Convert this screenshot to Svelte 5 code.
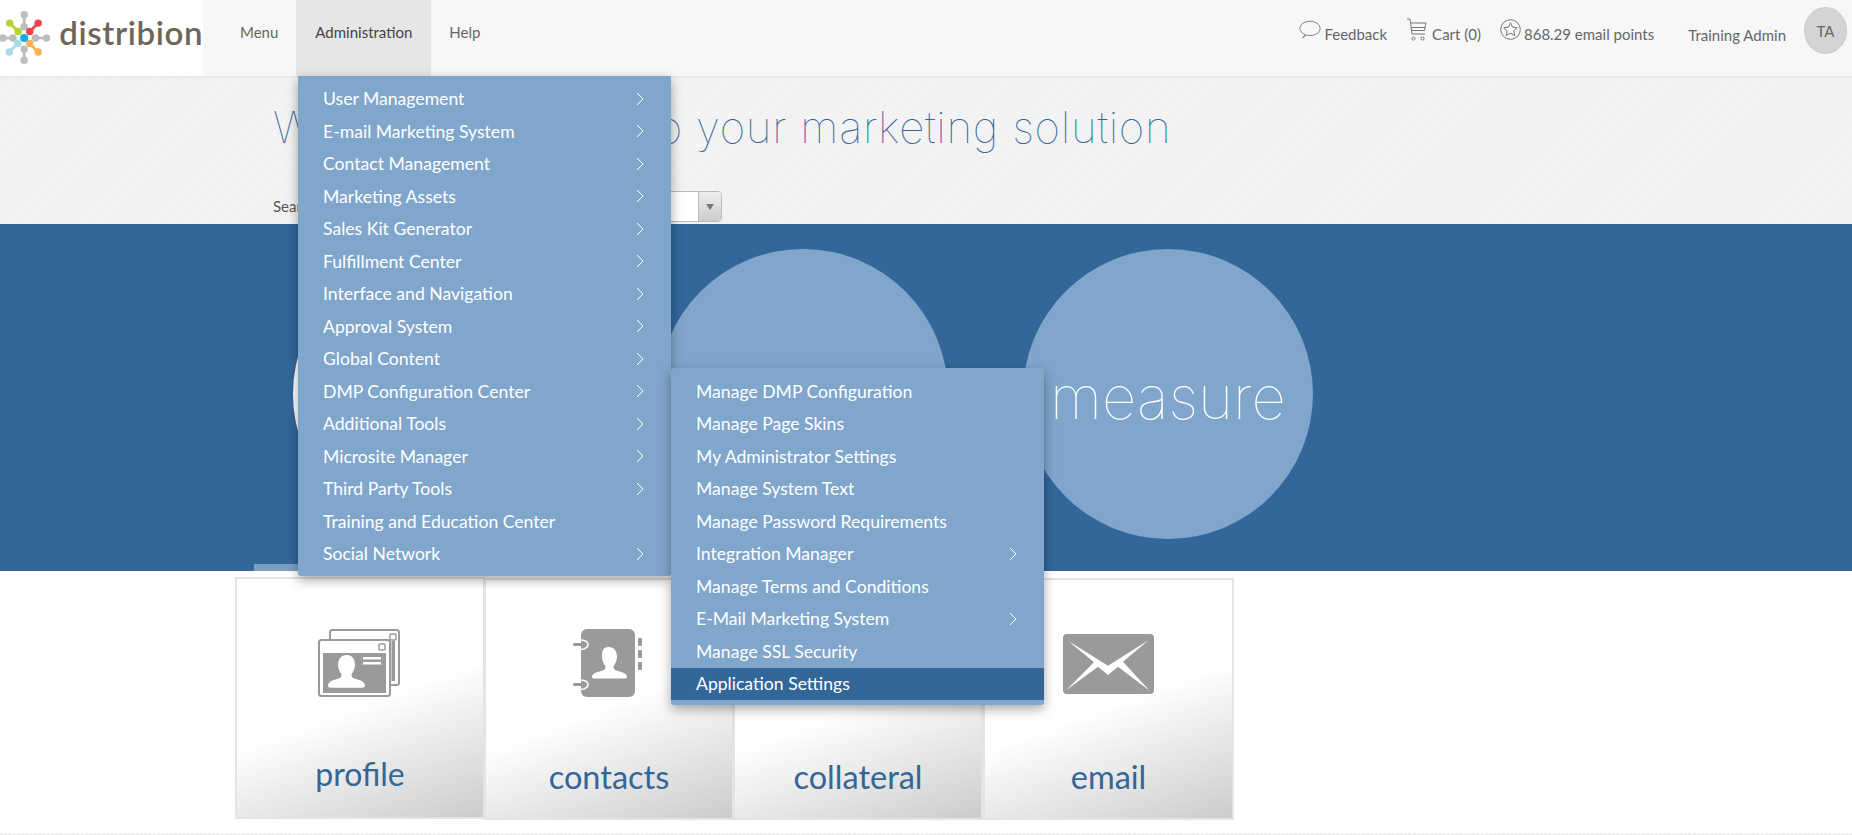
<script lang="ts">
  const navItems = ['Menu', 'Administration', 'Help'];

  const adminItems = [
    { label: 'User Management', sub: true },
    { label: 'E-mail Marketing System', sub: true },
    { label: 'Contact Management', sub: true },
    { label: 'Marketing Assets', sub: true },
    { label: 'Sales Kit Generator', sub: true },
    { label: 'Fulfillment Center', sub: true },
    { label: 'Interface and Navigation', sub: true },
    { label: 'Approval System', sub: true },
    { label: 'Global Content', sub: true },
    { label: 'DMP Configuration Center', sub: true },
    { label: 'Additional Tools', sub: true },
    { label: 'Microsite Manager', sub: true },
    { label: 'Third Party Tools', sub: true },
    { label: 'Training and Education Center', sub: false },
    { label: 'Social Network', sub: true }
  ];

  const dmpItems = [
    { label: 'Manage DMP Configuration', sub: false },
    { label: 'Manage Page Skins', sub: false },
    { label: 'My Administrator Settings', sub: false },
    { label: 'Manage System Text', sub: false },
    { label: 'Manage Password Requirements', sub: false },
    { label: 'Integration Manager', sub: true },
    { label: 'Manage Terms and Conditions', sub: false },
    { label: 'E-Mail Marketing System', sub: true },
    { label: 'Manage SSL Security', sub: false },
    { label: 'Application Settings', sub: false, active: true }
  ];

  const spokes = [
    { x1: 26, y1: 12, x2: 26, y2: 25, c: '#bdbdbd' },
    { x1: 3, y1: 37, x2: 14, y2: 37, c: '#bdbdbd' },
    { x1: 50, y1: 37, x2: 38, y2: 37, c: '#bdbdbd' },
    { x1: 26, y1: 61, x2: 26, y2: 49, c: '#bdbdbd' },
    { x1: 10.5, y1: 21, x2: 19.5, y2: 30, c: '#b5d334' },
    { x1: 41, y1: 21, x2: 32, y2: 30, c: '#e8434b' },
    { x1: 10, y1: 52, x2: 19, y2: 43, c: '#a8dde8' },
    { x1: 41, y1: 52, x2: 32, y2: 43, c: '#fbb254' }
  ];
</script>

<div class="page">
  <header class="topbar">
    <div class="logo">
      <svg width="54" height="74" viewBox="0 0 54 74">
        {#each spokes as s}
          <line x1={s.x1} y1={s.y1} x2={s.x2} y2={s.y2} stroke={s.c} stroke-width="3" />
          <circle cx={s.x1} cy={s.y1} r="4" fill={s.c} />
          <circle cx={s.x2} cy={s.y2} r="4" fill={s.c} />
        {/each}
        <circle cx="26" cy="37" r="4.4" fill="#0fb0e0" />
      </svg>
      <span class="logo-text">distribion</span>
    </div>

    <nav class="nav">
      {#each navItems as item}
        <span class="nav-item" class:open={item === 'Administration'}>{item}</span>
      {/each}
    </nav>

    <div class="tools">
      <span class="tool feedback">
        <svg width="22" height="21" viewBox="0 0 24 22" fill="none" stroke="#777" stroke-width="1">
          <path d="M4 19.5c1.500-.5 2.500-1.500 3-3 C3.500 15.500 1 13 1 10 C1 5.500 6 2 12 2 s11 3.500 11 8 -5 7.500 -11 7.500 c-1.500 0 -3 -.2 -4 -.5 -1 1.300 -2.500 2.300 -4 2.500z" />
        </svg>
        Feedback
      </span>
      <span class="tool">
        <svg width="21" height="24" viewBox="0 0 21 24" fill="none" stroke="#777" stroke-width="1">
          <path d="M1 1h3l2 15h13" />
          <path d="M4.500 5H20l-1.500 7.500H5.500" />
          <path d="M5.500 9.500h13.500" />
          <circle cx="7.500" cy="20.500" r="1.600" />
          <circle cx="16.500" cy="20.500" r="1.600" />
        </svg>
        Cart (0)
      </span>
      <span class="tool points">
        <svg width="21" height="21" viewBox="0 0 21 21" fill="none" stroke="#777" stroke-width="1">
          <circle cx="10.500" cy="10.500" r="9.800" />
          <path d="M10.500 3.800l2 4.300 4.700.6-3.400 3.200.9 4.600-4.200-2.300-4.200 2.300.9-4.600-3.400-3.200 4.700-.6z" />
        </svg>
        868.29 email points
      </span>
      <span class="user">Training Admin</span>
      <span class="avatar">TA</span>
    </div>
  </header>

  <section class="welcome">
    <h1><span class="greeting">Welcome</span> to your marketing solution</h1>
    <div class="search">
      <span class="search-label">Search</span>
      <div class="select">
        <span class="select-field"></span>
        <span class="select-btn"><span class="caret"></span></span>
      </div>
    </div>
  </section>

  <section class="hero">
    <div class="circle white"></div>
    <div class="circle"></div>
    <div class="circle"><span class="circle-text">measure</span></div>
    <span class="hero-tab"></span>
  </section>

  <section class="tiles">
    <div class="tile">
      <svg class="icon-profile" width="82" height="68" viewBox="0 0 82 68" fill="none">
        <rect x="12" y="1" width="69" height="55" rx="2.500" stroke="#9a9a9a" stroke-width="2" />
        <rect x="73.500" y="12" width="3.500" height="40" fill="#9a9a9a" />
        <rect x="72" y="5" width="6" height="6" rx="1" stroke="#9a9a9a" stroke-width="1.500" />
        <rect x="1" y="11" width="71" height="56" rx="2.500" stroke="#9a9a9a" stroke-width="2" fill="#fff" />
        <rect x="61" y="15" width="6" height="6" rx="1" stroke="#9a9a9a" stroke-width="1.500" />
        <rect x="5" y="24" width="63" height="40" fill="#9a9a9a" />
        <path d="M29 26c5 0 8 4 8 10 0 4-2 7-3.500 9.500 0 3 2 4 6 5 5 1 7.500 3.500 7.500 6.500 0 1-1 1.700-3 1.700H13c-2 0-3-.7-3-1.700 0-3 2.500-5.500 7.500-6.500 4-1 6-2 6-5-1.500-2.500-3.500-5.500-3.500-9.500 0-6 3-10 9-10z" fill="#fff" />
        <rect x="45" y="28" width="18" height="2.500" fill="#fff" />
        <rect x="45" y="33" width="18" height="2.500" fill="#fff" />
      </svg>
      <span class="tile-label">profile</span>
    </div>
    <div class="tile">
      <svg class="icon-contacts" width="70" height="68" viewBox="0 0 70 68">
        <rect x="8" y="0" width="54" height="68" rx="6" fill="#9a9a9a" />
        <rect x="65" y="9" width="4" height="8" rx="1" fill="#9a9a9a" />
        <rect x="65" y="21" width="4" height="8" rx="1" fill="#9a9a9a" />
        <rect x="65" y="33" width="4" height="8" rx="1" fill="#9a9a9a" />
        <path d="M8 11q7 .5 7 4.500t-7 5" fill="#9a9a9a" stroke="#fff" stroke-width="1.500" />
        <rect x="0" y="14" width="13" height="3" rx="1.500" fill="#9a9a9a" />
        <path d="M8 51q7 .5 7 4.500t-7 5" fill="#9a9a9a" stroke="#fff" stroke-width="1.500" />
        <rect x="0" y="54" width="13" height="3" rx="1.500" fill="#9a9a9a" />
        <path d="M35.500 18c5.500 0 8.500 4 8.500 10 0 4-2 7-3.500 9.500 0 3 2 4 6 5 5 1 7.500 3 7.500 5.500 0 1-1 1.500-3 1.500H22c-2 0-3-.5-3-1.500 0-2.500 2.500-4.500 7.500-5.500 4-1 6-2 6-5-1.500-2.500-3.500-5.500-3.500-9.500 0-6 1-10 6.500-10z" fill="#fff" />
      </svg>
      <span class="tile-label">contacts</span>
    </div>
    <div class="tile">
      <span class="tile-label">collateral</span>
    </div>
    <div class="tile">
      <svg class="envelope" width="91" height="60" viewBox="0 0 91 60">
        <rect x="0" y="0" width="91" height="60" rx="4" fill="#9a9a9a" />
        <path d="M5 6.700L45 31.700 85.700 6 60 27.700 86.700 56.700 55 32.700 45 41 35 32.700 3.300 56 31 28.300z" fill="#fff" />
      </svg>
      <span class="tile-label">email</span>
    </div>
  </section>

  <div class="footer-strip"></div>

  <ul class="menu menu-admin">
    {#each adminItems as item}
      <li class="menu-row">
        <span>{item.label}</span>
        {#if item.sub}
          <svg class="chev" width="8" height="14" viewBox="0 0 8 14" fill="none" stroke="#fff" stroke-width="1">
            <path d="M1 1l6 6-6 6" />
          </svg>
        {/if}
      </li>
    {/each}
  </ul>

  <ul class="menu menu-dmp">
    {#each dmpItems as item}
      <li class="menu-row" class:active={item.active}>
        <span>{item.label}</span>
        {#if item.sub}
          <svg class="chev" width="8" height="14" viewBox="0 0 8 14" fill="none" stroke="#fff" stroke-width="1">
            <path d="M1 1l6 6-6 6" />
          </svg>
        {/if}
      </li>
    {/each}
  </ul>
</div>

<style>
  :global(body) {
    margin: 0;
    background: #fff;
    font-family: 'Lato', 'Liberation Sans', sans-serif;
  }

  .page {
    position: relative;
    height: 835px;
    overflow: hidden;
  }

  .topbar {
    display: flex;
    height: 76px;
    background: #f7f7f7;
    border-bottom: 2px solid #eaeaea;
  }

  .logo {
    width: 203px;
    background: #fff;
    display: flex;
    align-items: center;
    flex-shrink: 0;
  }

  .logo-text {
    font-size: 33px;
    font-weight: 600;
    color: #6f6558;
    letter-spacing: 0.6px;
    margin-left: 9px;
    margin-top: -13px;
  }

  .nav {
    display: flex;
    margin-left: 19px;
  }

  .nav-item {
    padding: 23px 18px 0;
    font-size: 15px;
    color: #666;
  }

  .nav-item.open {
    background: #e6e6e6;
    color: #444;
    padding: 23px 19px 0;
  }

  .tools {
    margin-left: auto;
    display: flex;
    align-items: flex-start;
    padding-right: 5px;
    font-size: 15px;
    color: #666;
  }

  .tool {
    display: flex;
    align-items: center;
    gap: 5px;
    margin-right: 19px;
    height: 60px;
    padding-top: 8px;
    box-sizing: border-box;
  }

  .tool svg {
    margin-top: -9px;
  }

  .tool.feedback {
    gap: 3px;
  }

  .tool.points {
    gap: 3px;
  }

  .user {
    margin: 0 18px 0 15px;
    line-height: 70px;
  }

  .avatar {
    width: 43px;
    height: 47px;
    margin-top: 7px;
    border-radius: 50%;
    background: #d4d4d4;
    border: 1px solid #ccc;
    box-sizing: border-box;
    display: flex;
    align-items: center;
    justify-content: center;
    font-size: 15px;
  }

  .welcome {
    height: 146px;
    box-sizing: border-box;
    padding: 21px 0 0 273px;
    background-color: #f3f3f3;
    background-image: repeating-linear-gradient(135deg, #f6f6f6 0 1px, #f1f1f1 1px 3px);
  }

  h1 {
    margin: 0;
    font-family: 'Inter', 'Lato', sans-serif;
    font-size: 44px;
    font-weight: 100;
    line-height: 56px;
    letter-spacing: 0.7px;
    color: #336699;
  }

  .greeting {
    margin-right: 169px;
  }

  .search {
    display: flex;
    align-items: center;
    margin-top: 35px;
    width: 449px;
    height: 32px;
  }

  .search-label {
    font-size: 15px;
    color: #555;
  }

  .select {
    margin-left: auto;
    display: flex;
    width: 320px;
    height: 31px;
    border: 1px solid #bbb;
    border-radius: 4px;
    box-sizing: border-box;
    overflow: hidden;
    background: #fff;
  }

  .select-field {
    flex: 1;
  }

  .select-btn {
    width: 22px;
    background: linear-gradient(#eee, #ccc);
    border-left: 1px solid #bbb;
    display: flex;
    align-items: center;
    justify-content: center;
  }

  .caret {
    width: 0;
    height: 0;
    border-left: 4px solid transparent;
    border-right: 4px solid transparent;
    border-top: 6px solid #777;
    margin-top: 2px;
  }

  .hero {
    position: relative;
    height: 347px;
    background: #336699;
    display: flex;
    align-items: center;
    gap: 75px;
    padding: 0 0 8px 293px;
    box-sizing: border-box;
  }

  .circle {
    width: 290px;
    height: 290px;
    border-radius: 50%;
    background: #80a6cc;
    display: flex;
    align-items: center;
    justify-content: center;
    flex-shrink: 0;
  }

  .circle.white {
    background: #fff;
  }

  .circle-text {
    font-family: 'Inter', 'Lato', sans-serif;
    font-size: 60px;
    font-weight: 100;
    color: #fff;
    margin-top: 7px;
  }

  .hero-tab {
    position: absolute;
    left: 254px;
    bottom: 0;
    width: 60px;
    height: 7px;
    background: #7f9fc0;
  }

  .tiles {
    display: flex;
    margin: 6px 0 0 235px;
  }

  .tile {
    width: 250px;
    height: 242px;
    box-sizing: border-box;
    border: 2px solid #e4e4e4;
    background: linear-gradient(160deg, #fff 52%, #ccc 100%);
    display: flex;
    flex-direction: column;
    align-items: center;
    position: relative;
    padding-top: 50px;
  }

  .tile:nth-child(-n + 2) {
    margin-right: -1px;
  }

  .tile:last-child {
    width: 251px;
  }

  .tile + .tile {
    margin-top: 1px;
    padding-top: 49px;
  }

  .icon-profile {
    margin-right: 3px;
  }

  .icon-contacts {
    margin-right: 2px;
  }

  .envelope {
    margin-top: 5px;
  }

  .tile-label {
    position: absolute;
    bottom: 22px;
    font-size: 32.500px;
    color: #336699;
    line-height: 38px;
  }

  .tile:first-child .tile-label {
    bottom: 24px;
    font-size: 32px;
  }

  .footer-strip {
    height: 4px;
    margin-top: 13px;
    background: repeating-linear-gradient(135deg, #f7f7f7 0 1px, #efefef 1px 3px);
  }

  .menu {
    position: absolute;
    margin: 0;
    padding: 6.500px 0 5.500px;
    list-style: none;
    background: #80a6cc;
    width: 373px;
    border-radius: 0 0 3px 3px;
    box-shadow: 0 4px 12px rgba(0, 0, 0, 0.35);
    color: #fff;
    font-size: 17.600px;
  }

  .menu-admin {
    left: 298px;
    top: 76px;
  }

  .menu-dmp {
    left: 671px;
    top: 368px;
    border-radius: 3px;
    padding: 7px 0 5px;
  }

  .menu-row {
    display: flex;
    align-items: center;
    justify-content: space-between;
    height: 32.500px;
    padding: 0 27px 0 25px;
  }

  .menu-row.active {
    background: #336699;
  }

  .chev {
    flex-shrink: 0;
  }
</style>
